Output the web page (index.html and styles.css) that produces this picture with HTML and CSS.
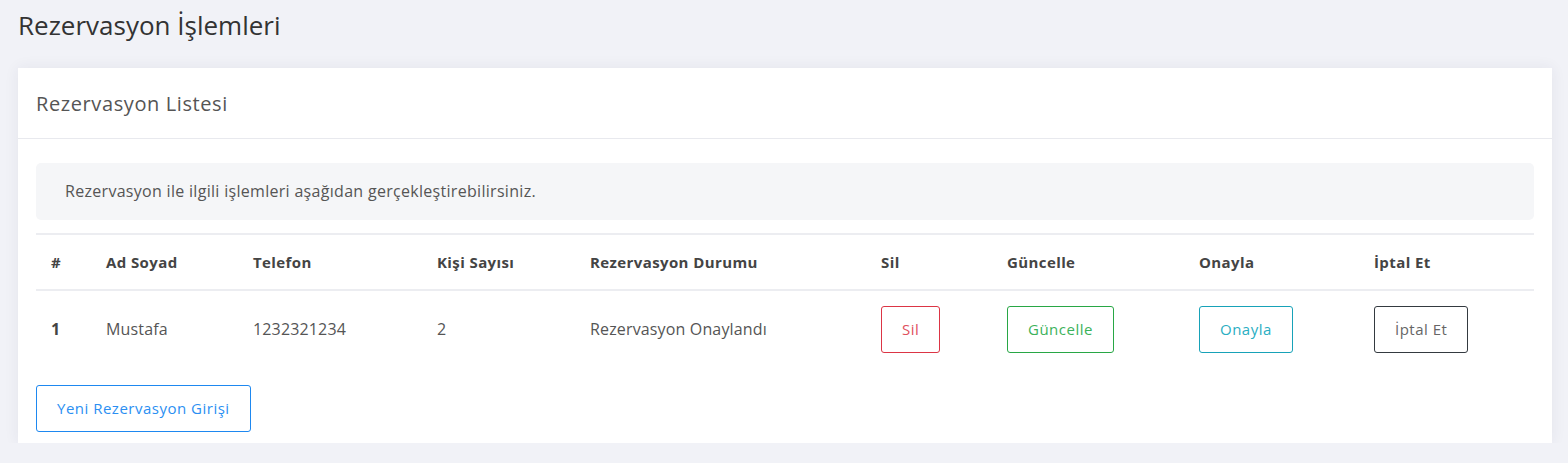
FILE: index.html
```html
<!DOCTYPE html>
<html lang="tr">
<head>
<meta charset="utf-8">
<title>Rezervasyon İşlemleri</title>
<link rel="stylesheet" href="styles.css">
</head>
<body>
<main class="page">
  <h1 class="page-title">Rezervasyon İşlemleri</h1>
  <section class="card">
    <header class="card-header">
      <h2 class="card-title">Rezervasyon Listesi</h2>
    </header>
    <div class="card-body">
      <div class="alert">Rezervasyon ile ilgili işlemleri aşağıdan gerçekleştirebilirsiniz.</div>
      <table class="table">
        <colgroup>
          <col class="c-no"><col class="c-name"><col class="c-tel"><col class="c-count"><col class="c-status"><col class="c-del"><col class="c-upd"><col class="c-ok"><col class="c-cancel">
        </colgroup>
        <thead>
          <tr>
            <th>#</th><th>Ad Soyad</th><th>Telefon</th><th>Kişi Sayısı</th><th>Rezervasyon Durumu</th><th>Sil</th><th>Güncelle</th><th>Onayla</th><th>İptal Et</th>
          </tr>
        </thead>
        <tbody>
          <tr>
            <th>1</th>
            <td>Mustafa</td>
            <td>1232321234</td>
            <td>2</td>
            <td>Rezervasyon Onaylandı</td>
            <td><a class="btn btn-danger" href="#">Sil</a></td>
            <td><a class="btn btn-success" href="#">Güncelle</a></td>
            <td><a class="btn btn-info" href="#">Onayla</a></td>
            <td><a class="btn btn-dark" href="#">İptal Et</a></td>
          </tr>
        </tbody>
      </table>
      <a class="btn btn-primary btn-wide" href="#">Yeni Rezervasyon Girişi</a>
    </div>
  </section>
</main>
</body>
</html>
```
FILE: styles.css
```css
* { box-sizing: border-box; }
html, body { margin: 0; padding: 0; }
body {
  background: #f1f2f7;
  font-family: "Open Sans", "Noto Sans", "Liberation Sans", sans-serif;
  color: #555;
  font-size: 16px;
}
.page { padding: 0 16px 0 18px; }
.page-title {
  margin: 0;
  padding: 7px 0 0 0;
  height: 68px;
  font-size: 26px;
  font-weight: 400;
  line-height: 36px;
  color: #333;
}
.card {
  background: #fff;
  box-shadow: 0 0 14px rgba(40, 45, 80, 0.07);
  height: 375px;
}
.card-header {
  height: 71px;
  border-bottom: 1px solid #e8e9ee;
  padding: 0 18px;
  display: flex;
  align-items: center;
}
.card-title {
  margin: 0;
  font-size: 20px;
  letter-spacing: 0.6px;
  font-weight: 400;
  color: #555;
}
.card-body { padding: 24px 18px 0 18px; }
.alert {
  background: #f5f6f8;
  border-radius: 5px;
  padding: 18px 29px;
  line-height: 21px;
  font-size: 16px;
  letter-spacing: 0.3px;
  color: #555;
  margin-bottom: 13px;
}
.table {
  width: 100%;
  border-collapse: collapse;
  table-layout: fixed;
  margin-bottom: 18px;
}
.c-no { width: 55px; }
.c-name { width: 147px; }
.c-tel { width: 184px; }
.c-count { width: 153px; }
.c-status { width: 291px; }
.c-del { width: 126px; }
.c-upd { width: 192px; }
.c-ok { width: 175px; }
.c-cancel { width: 175px; }
.table th, .table td {
  text-align: left;
  padding: 0 15px;
  line-height: 20px;
}
.table thead th {
  height: 56px;
  border-top: 2px solid #ecedf1;
  border-bottom: 2px solid #ecedf1;
  font-size: 15px;
  letter-spacing: 0.4px;
  font-weight: 700;
  color: #444;
}
.table tbody th, .table tbody td {
  height: 77px;
  font-size: 16px;
  letter-spacing: 0.15px;
  color: #555;
}
.table tbody th { font-weight: 700; color: #444; }
.btn {
  display: inline-block;
  border: 1px solid;
  border-radius: 3px;
  padding: 12px 20px;
  line-height: 21px;
  font-size: 15px;
  letter-spacing: 0.5px;
  text-decoration: none;
  background: #fff;
}
.btn-wide { padding: 12px 20px; }
.btn-danger { border-color: #dc3545; color: #e0505d; }
.btn-success { border-color: #28a745; color: #3bb25a; }
.btn-info { border-color: #17a2b8; color: #2aaec2; }
.btn-dark { border-color: #343a40; color: #666; }
.btn-primary { border-color: #1e88f0; color: #2b8ff2; }
```
